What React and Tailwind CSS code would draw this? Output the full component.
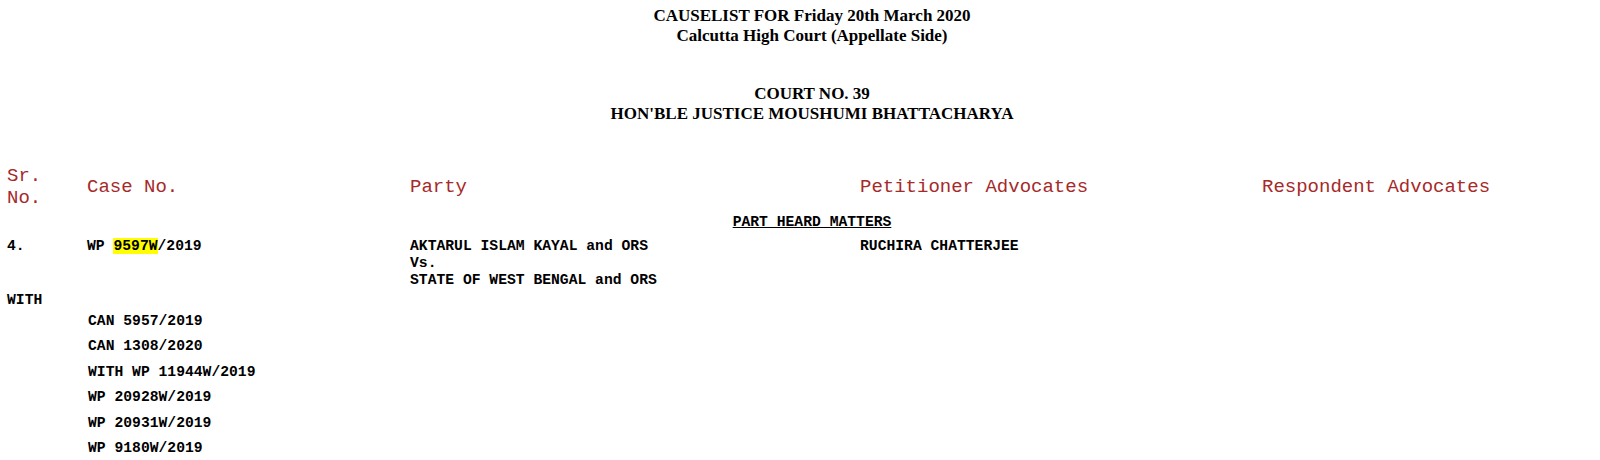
import React from "react";

const mono = "font-['Liberation_Mono','Courier_New',monospace]";

export default function App() {
  const connected = [
    "CAN 5957/2019",
    "CAN 1308/2020",
    "WITH WP 11944W/2019",
    "WP 20928W/2019",
    "WP 20931W/2019",
    "WP 9180W/2019",
  ];

  return (
    <div className="w-[1600px] h-[460px] overflow-hidden bg-white text-black">
      {/* Title block */}
      <div className="pl-[24px] pt-[6px] text-center font-['Liberation_Serif','Times_New_Roman',serif] font-bold text-[17px] leading-[20px]">
        <div>CAUSELIST FOR Friday 20th March 2020</div>
        <div>Calcutta High Court (Appellate Side)</div>
        <div className="mt-[38px]">COURT NO. 39</div>
        <div>HON'BLE JUSTICE MOUSHUMI BHATTACHARYA</div>
      </div>

      {/* Column headers */}
      <div
        className={`mt-[41px] pl-[7px] grid grid-cols-[80px_323px_450px_402px_1fr] items-center text-[19px] leading-[22px] text-[#a52a2a] ${mono}`}
      >
        <div>
          Sr.
          <br />
          No.
        </div>
        <div>Case No.</div>
        <div>Party</div>
        <div>Petitioner Advocates</div>
        <div>Respondent Advocates</div>
      </div>

      <div className={`text-[14.7px] leading-[17px] font-bold ${mono}`}>
        <div className="pl-[24px] mt-[5px] text-center underline">PART HEARD MATTERS</div>

        {/* Main case */}
        <div className="mt-[7px] pl-[7px] grid grid-cols-[80px_323px_450px_402px_1fr]">
          <div>4.</div>
          <div>
            WP <span className="bg-[#ffff00]">9597W</span>/2019
          </div>
          <div>
            <div>AKTARUL ISLAM KAYAL and ORS</div>
            <div>Vs.</div>
            <div>STATE OF WEST BENGAL and ORS</div>
          </div>
          <div>RUCHIRA CHATTERJEE</div>
          <div></div>
        </div>

        <div className="mt-[3px] pl-[7px]">WITH</div>
        <div className="pl-[88px]">
          {connected.map((c, i) => (
            <div key={i} className="leading-[25.4px]">
              {c}
            </div>
          ))}
        </div>
      </div>
    </div>
  );
}
